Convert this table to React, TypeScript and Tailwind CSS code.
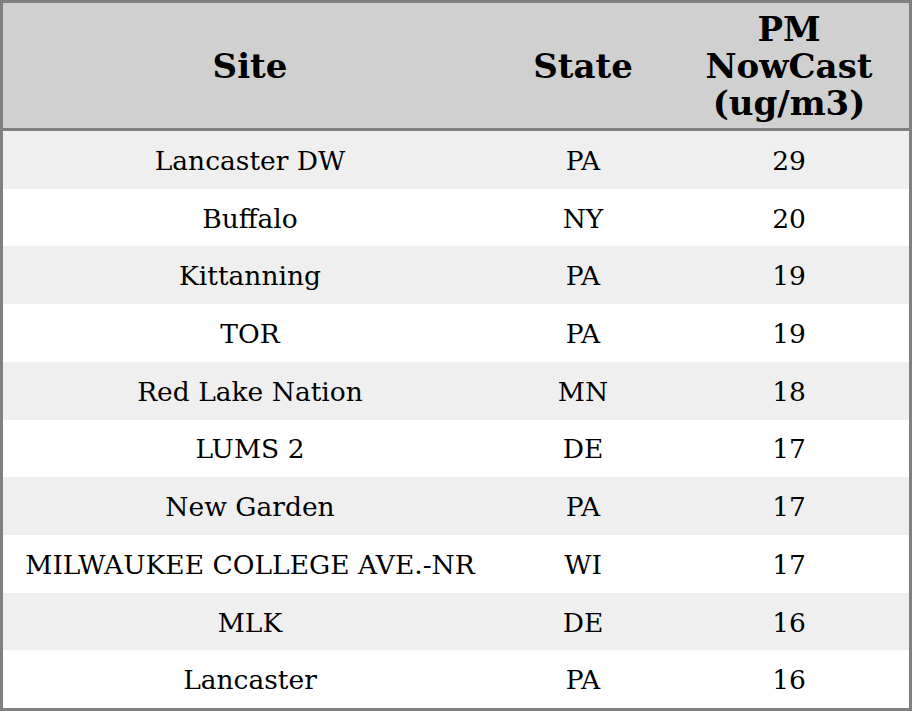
import React from 'react';

const rows = [
  { site: 'Lancaster DW', state: 'PA', pm: 29 },
  { site: 'Buffalo', state: 'NY', pm: 20 },
  { site: 'Kittanning', state: 'PA', pm: 19 },
  { site: 'TOR', state: 'PA', pm: 19 },
  { site: 'Red Lake Nation', state: 'MN', pm: 18 },
  { site: 'LUMS 2', state: 'DE', pm: 17 },
  { site: 'New Garden', state: 'PA', pm: 17 },
  { site: 'MILWAUKEE COLLEGE AVE.-NR', state: 'WI', pm: 17 },
  { site: 'MLK', state: 'DE', pm: 16 },
  { site: 'Lancaster', state: 'PA', pm: 16 },
];

const App = () => {
  return (
    <div className="w-[912px] h-[711px] bg-white font-['DejaVu_Serif',serif] text-black">
      <div className="border-[3px] border-[#808080] h-[711px] flex flex-col">
        {/* Header */}
        <div className="grid grid-cols-[494px_172px_240px] h-[124px] pt-[1px] bg-[#d0d0d0] border-b-[3px] border-[#808080] box-content text-[34px] font-bold leading-[37px] text-center">
          <div className="flex items-center justify-center">Site</div>
          <div className="flex items-center justify-center">State</div>
          <div className="flex items-center justify-center">
            PM
            <br />
            NowCast
            <br />
            (ug/m3)
          </div>
        </div>

        {/* Body rows */}
        <div className="flex-1 flex flex-col">
          {rows.map((r, i) => (
            <div
              key={i}
              className={`flex-1 grid grid-cols-[494px_172px_240px] items-center pt-[2px] text-center text-[26.5px] ${
                i % 2 === 0 ? 'bg-[#efefef]' : 'bg-white'
              }`}
            >
              <div>{r.site}</div>
              <div>{r.state}</div>
              <div>{r.pm}</div>
            </div>
          ))}
        </div>
      </div>
    </div>
  );
};

export default App;
